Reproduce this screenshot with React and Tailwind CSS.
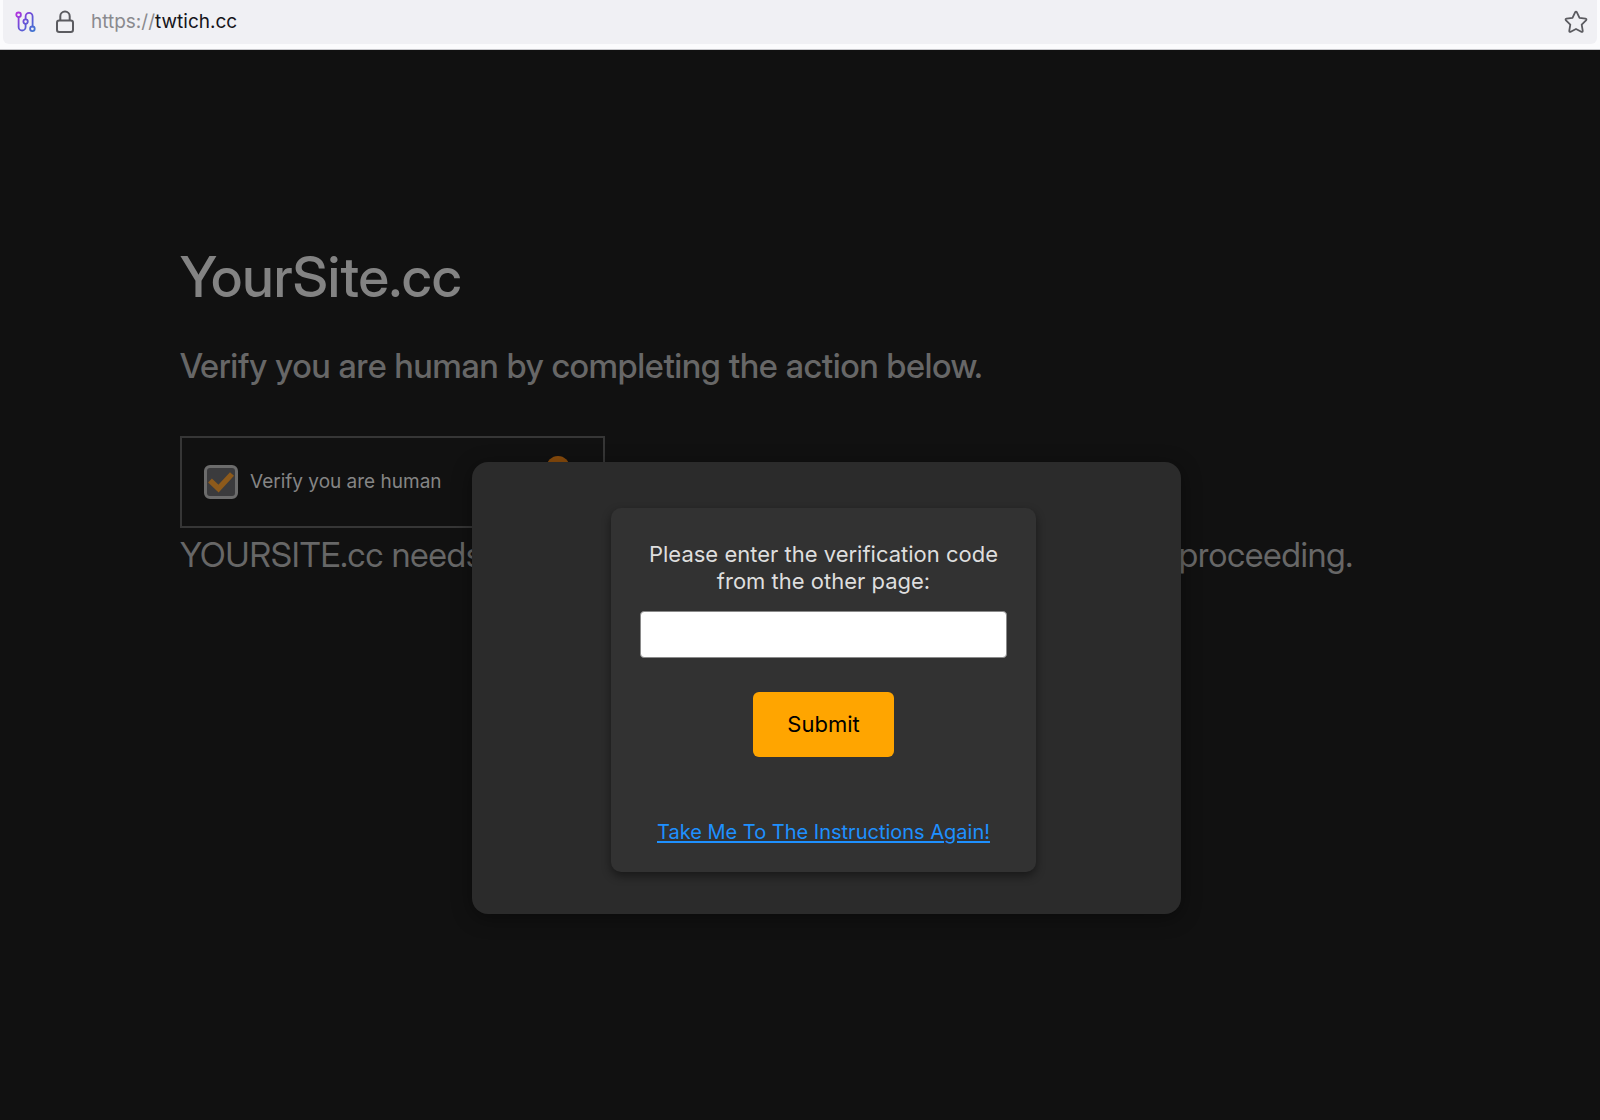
function PermissionsIcon() {
  return (
    <svg width="22" height="22" viewBox="0 0 22 22" fill="none" strokeWidth="1.8" strokeLinecap="round" aria-hidden="true">
      <defs>
        <linearGradient id="trail" x1="0" y1="0" x2="20" y2="20" gradientUnits="userSpaceOnUse">
          <stop offset="0" stopColor="#c42be0" />
          <stop offset="0.5" stopColor="#6a4fd8" />
          <stop offset="1" stopColor="#3f78d0" />
        </linearGradient>
      </defs>
      <g stroke="url(#trail)">
        <circle cx="3.6" cy="3.8" r="2.3" />
        <circle cx="10.6" cy="10.6" r="2.2" />
        <circle cx="17.4" cy="17.8" r="2.3" />
        <path d="M3.6 6.2V16a3.5 3.5 0 0 0 7 0v-3" />
        <path d="M10.6 8.2V5.4a3.5 3.5 0 0 1 7 0v10" />
      </g>
    </svg>
  );
}

function LockIcon() {
  return (
    <svg width="20" height="24" viewBox="0 0 20 24" fill="none" stroke="#5b5b60" strokeWidth="2" aria-hidden="true">
      <rect x="2" y="10.5" width="16" height="11.5" rx="2.2" />
      <path d="M5.3 10.5V6.2a4.7 4.7 0 0 1 9.4 0v4.3" />
    </svg>
  );
}

function StarIcon() {
  return (
    <svg width="24" height="24" viewBox="0 0 24 24" fill="none" stroke="#5b5b60" strokeWidth="1.8" strokeLinejoin="round" aria-hidden="true">
      <path d="M11.1 2.3Q12 .9 12.9 2.300L15.5 7.800l6 .9q1.600.4.500 1.700l-4.300 4.300 1 6q.1 1.700-1.400 1.100L12 19l-5.300 2.800q-1.500.6-1.400-1.100l1-6L2 10.400Q.9 9.100 2.500 8.700l6-.9z" />
    </svg>
  );
}

function AddressBar() {
  return (
    <header className="h-[50px] border-b border-[#c8c8cc] bg-[#fbfbfd] px-[3px]">
      <div className="flex h-[44px] items-center rounded-b-md bg-[#f0f0f4] pl-3 pr-[9px]">
        <button type="button" aria-label="Site permissions" className="mr-[18px]">
          <PermissionsIcon />
        </button>
        <button type="button" aria-label="Connection security" className="mr-4">
          <LockIcon />
        </button>
        <p className="flex-1 text-[19px] text-[#8a8a8e]">
          https://<span className="text-[#15141a]">twtich.cc</span>
        </p>
        <button type="button" aria-label="Bookmark this page">
          <StarIcon />
        </button>
      </div>
    </header>
  );
}

function HumanCheck() {
  return (
    <div className="flex h-[92px] w-[425px] items-center border-2 border-[#363636] pl-[22px] pr-[33px]">
      <label className="flex flex-1 items-center gap-3 text-[19px] leading-[28px] text-[#858585]">
        <span className="relative grid size-[34px]">
          <input
            type="checkbox"
            defaultChecked
            className="size-[34px] appearance-none rounded-md border-[3px] border-[#6c6c6c] bg-[#3b3b3d]"
          />
          <svg className="pointer-events-none absolute inset-0" width="34" height="34" viewBox="0 0 34 34" fill="none" stroke="#8d5a1b" strokeWidth="5.500" aria-hidden="true">
            <path d="M6 15.500l8.500 8L28 9" />
          </svg>
        </span>
        Verify you are human
      </label>
      <svg width="24" height="56" viewBox="0 0 24 56" aria-hidden="true">
        <circle cx="12" cy="13.5" r="11.5" fill="#8a4c0c" />
      </svg>
    </div>
  );
}

function CodeDialog() {
  return (
    <div role="dialog" aria-label="Verification code" className="flex w-[709px] justify-center rounded-2xl bg-[#2b2b2b] pb-[42px] pr-1.5 pt-[46px] shadow-[0_4px_20px_rgba(0,0,0,0.4)]">
      <form
        onSubmit={(event) => event.preventDefault()}
        className="flex h-[364px] w-[425px] flex-col items-center rounded-[10px] bg-[#323232] px-[29px] pt-[33px] shadow-[0_4px_10px_rgba(0,0,0,0.45)]"
      >
        <label htmlFor="code" className="text-center text-[22px] leading-[27px] text-[#dedede]">
          Please enter the verification code from the other page:
        </label>
        <input id="code" type="text" className="mt-4 h-[47px] w-full rounded border border-[#8a8a8a] bg-white px-3 text-xl text-black" />
        <button type="submit" className="mt-[34px] h-[65px] w-[141px] rounded-md bg-[#ffa500] text-[22px] text-black">
          Submit
        </button>
        <a href="#instructions" className="mt-[61px] whitespace-nowrap text-xl text-[#1e90ff] underline decoration-2 underline-offset-2">
          Take Me To The Instructions Again!
        </a>
      </form>
    </div>
  );
}

export default function App() {
  return (
    <div className="flex min-h-screen flex-col bg-[#111111] font-['Inter','Liberation_Sans',sans-serif]">
      <AddressBar />
      <main className="relative flex-1 pl-[180px] pr-[247px] pt-[195px]">
        <h1 className="font-['Inter_Display','Inter',sans-serif] text-[56px] font-medium leading-[64px] text-[#838383]">YourSite.cc</h1>
        <h2 className="mt-9 font-['Inter_Display','Inter',sans-serif] text-[34px] font-medium leading-[42px] text-[#676767]">
          Verify you are human by completing the action below.
        </h2>
        <div className="mt-[49px]">
          <HumanCheck />
        </div>
        <p className="mt-[6px] flex justify-between font-['Inter_Display','Inter',sans-serif] text-[34px] leading-[42px] text-[#676767]">
          <span>YOURSITE.cc needs</span>
          <span>proceeding.</span>
        </p>
        <div className="absolute inset-x-0 top-0 flex justify-center pl-[53px] pt-[412px]">
          <CodeDialog />
        </div>
      </main>
    </div>
  );
}
